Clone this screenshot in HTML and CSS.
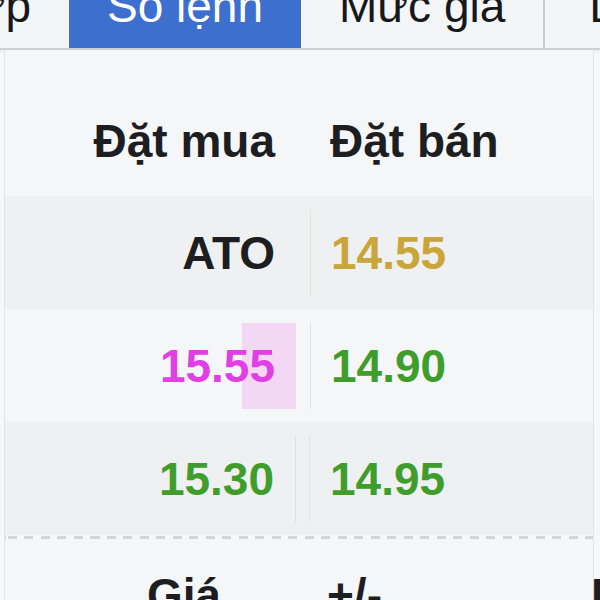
FILE: index.html
```html
<!DOCTYPE html>
<html lang="vi">
<head>
    <meta charset="UTF-8">
    <meta name="viewport" content="width=device-width, initial-scale=1.0">
    <title>Sổ lệnh</title>
    <link rel="stylesheet" href="styles.css">
</head>
<body>
    <nav class="tabs">
        <div class="tab tab-first">Tổng hợp</div>
        <div class="tab active">Sổ lệnh</div>
        <div class="tab">Mức giá</div>
        <div class="tab tab-sep">Lịch sử</div>
    </nav>

    <section class="book">
        <div class="book-head">
            <div class="cell-buy">Đặt mua</div>
            <div class="cell-sell">Đặt bán</div>
        </div>

        <div class="book-row shade">
            <div class="cell-buy">ATO</div>
            <div class="cell-sell divider-warm text-ref">14.55</div>
        </div>

        <div class="book-row">
            <div class="cell-buy text-ceil flash"><span>15.55</span></div>
            <div class="cell-sell text-up">14.90</div>
        </div>

        <div class="book-row shade">
            <div class="cell-buy text-up edge">15.30</div>
            <div class="cell-sell text-up">14.95</div>
        </div>

        <div class="dashes"></div>

        <div class="match-head">
            <div class="col-price">Giá</div>
            <div class="col-change">+/-</div>
            <div class="col-vol">KL</div>
        </div>
    </section>
</body>
</html>
```

FILE: styles.css
```css
body {
    margin: 0;
    font-family: "Liberation Sans", Arial, sans-serif;
    font-size: 46px;
    background-color: #f6f7f9;
    color: #1d1e22;
    overflow: hidden;
}
.tabs {
    display: flex;
    height: 48px;
    margin-left: -206px;
    background-color: #f4f5f7;
    border-bottom: 2px solid #cdcfd2;
    box-shadow: 0 1px 3px rgba(0, 0, 0, 0.08);
    white-space: nowrap;
}
.tab {
    height: 48px;
    padding: 0 38px;
    line-height: 13px;
    color: #17181b;
    flex-shrink: 0;
}
.tab.active {
    background-color: #3d6fcf;
    color: white;
}
.tab-sep {
    border-left: 2px solid #c9cbce;
    padding-left: 44px;
}
.book {
    margin: 0 6px 0 4px;
    border-left: 1px solid #e2e4e7;
    border-right: 1px solid #e2e4e7;
    background-color: #f5f6f8;
    font-weight: bold;
}
.book-head {
    display: flex;
    padding: 68px 0 32px;
    line-height: 46px;
}
.book-row {
    display: flex;
    padding: 14px 0 13px;
    line-height: 46px;
}
.book-row.shade {
    background-color: #eff0f2;
}
.cell-buy {
    width: 270px;
    padding-right: 21px;
    text-align: right;
    flex-shrink: 0;
}
.cell-sell {
    margin-left: 14px;
    padding-left: 20px;
}
.book-row .cell-buy,
.book-row .cell-sell {
    height: 86px;
    display: flex;
    align-items: center;
}
.book-row .cell-buy {
    justify-content: flex-end;
    box-sizing: border-box;
    width: 291px;
}
.book-row .cell-sell {
    border-left: 1px solid #dfe1e4;
}
.book-row .divider-warm {
    border-left-color: #e6e2d6;
}
.edge {
    border-right: 1px solid #dfe1e4;
}
.book-row .edge + .cell-sell {
    margin-left: 13px;
}
.flash {
    position: relative;
}
.flash::after {
    content: "";
    position: absolute;
    top: 0;
    right: 0;
    bottom: 0;
    width: 54px;
    background-color: #f3d8f4;
}
.flash span {
    position: relative;
    z-index: 1;
}
.text-ref {
    color: #c9a53a;
}
.text-ceil {
    color: #e03fe4;
}
.text-up {
    color: #3f9d2b;
}
.dashes {
    height: 3px;
    margin-top: 1px;
    background-image: repeating-linear-gradient(to right, #d3d5d8 0 9px, transparent 9px 16.5px);
    background-position: 3px 0;
}
.match-head {
    display: flex;
    padding: 33px 0 0 142px;
    line-height: 46px;
    white-space: nowrap;
}
.col-price {
    width: 180px;
    flex-shrink: 0;
}
.col-change {
    width: 264px;
    flex-shrink: 0;
}
.col-vol {
    flex-shrink: 0;
}
```
